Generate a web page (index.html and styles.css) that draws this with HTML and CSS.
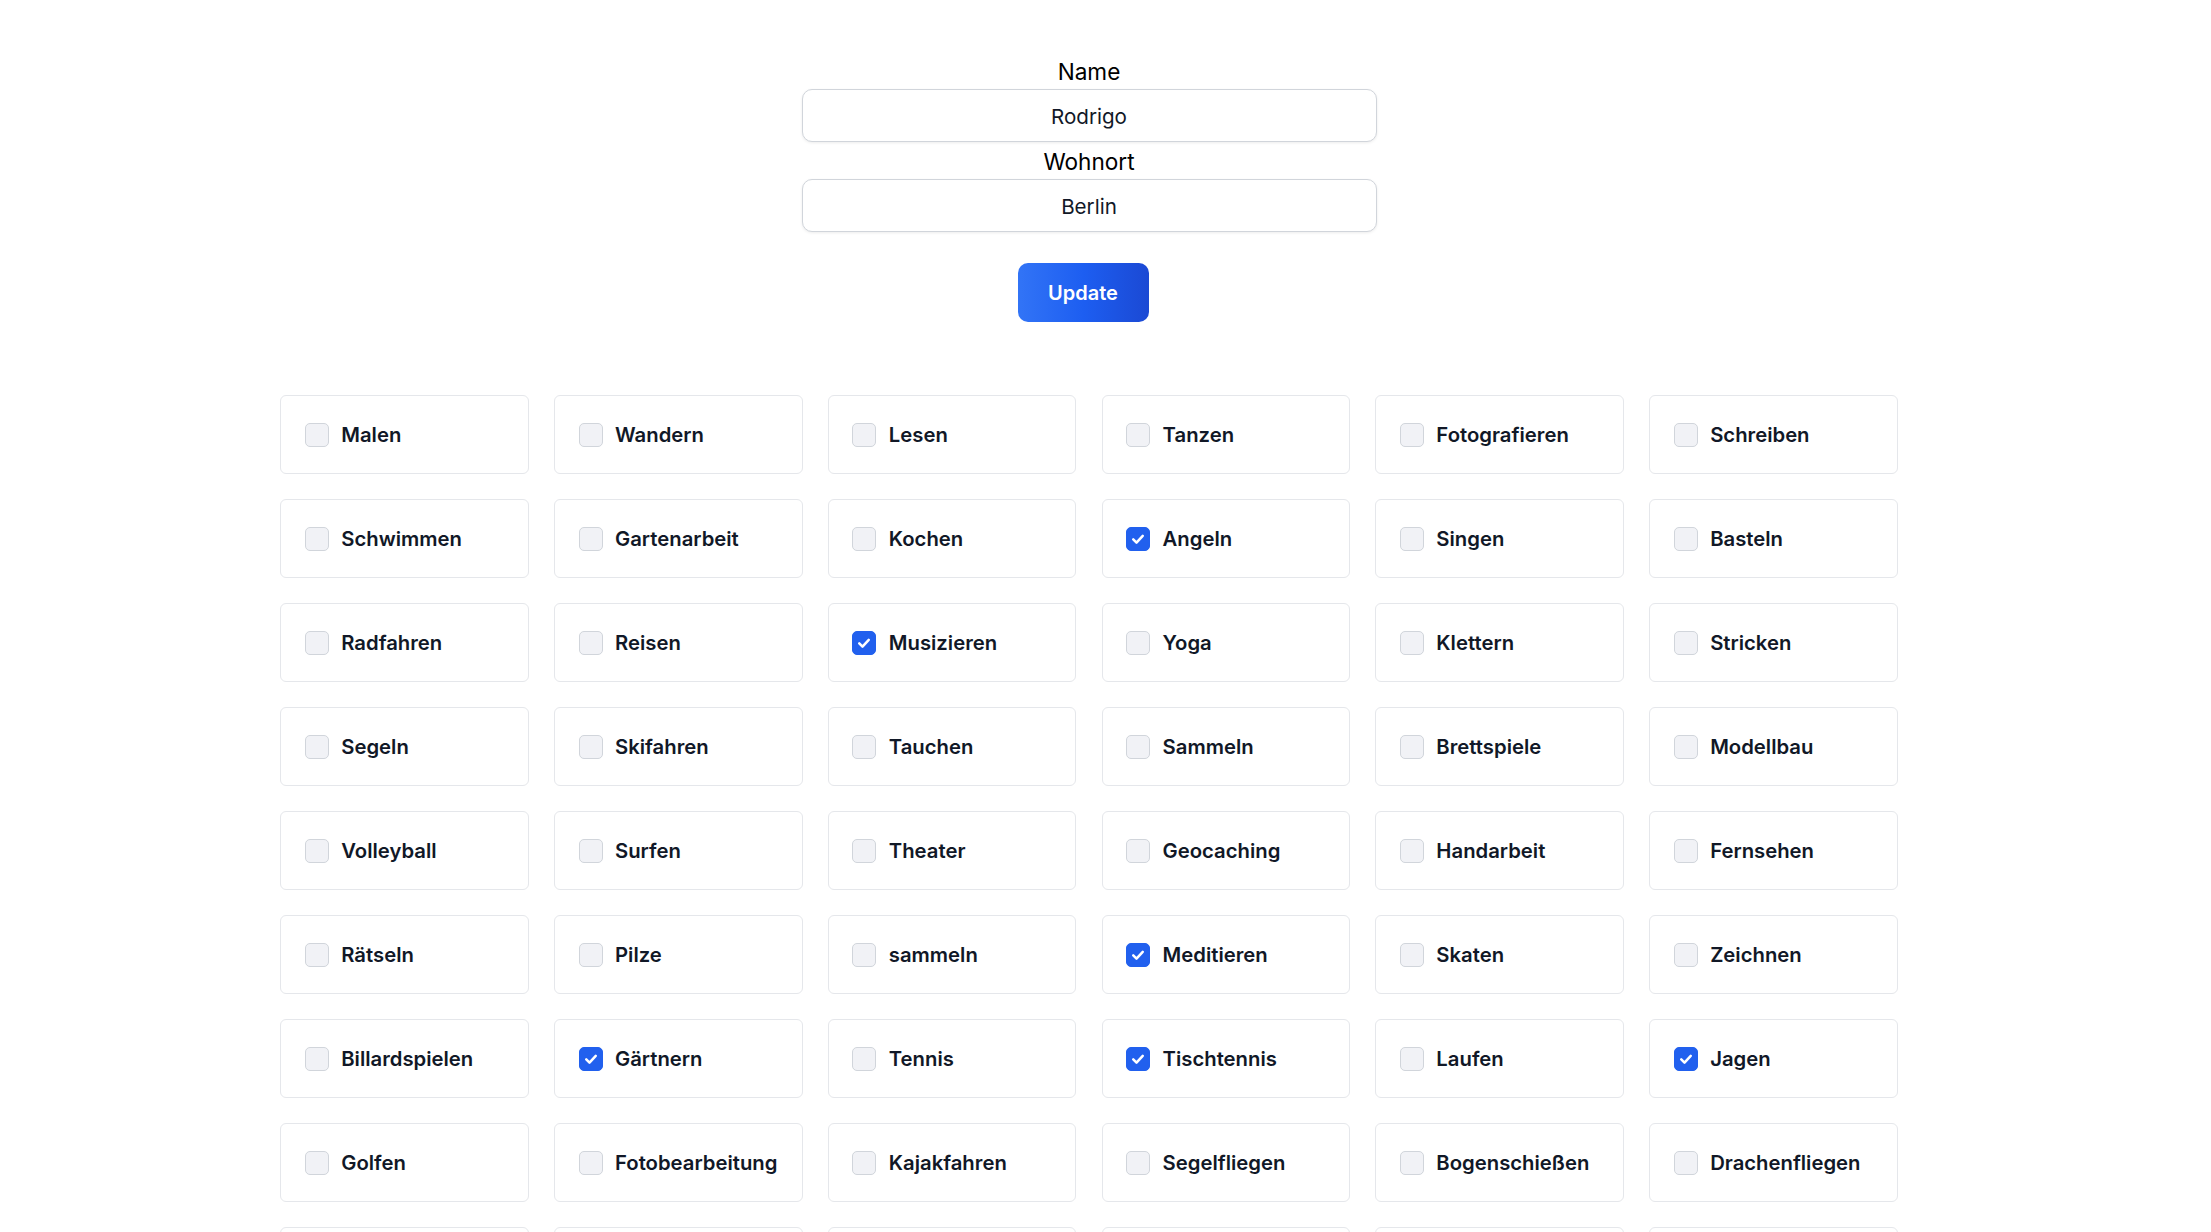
FILE: index.html
```html
<!DOCTYPE html>
<html lang="de">
<head>
<meta charset="utf-8">
<title>Hobbys</title>
<link rel="stylesheet" href="styles.css">
</head>
<body>
<div class="page">
  <form class="profile">
    <label class="field-label" for="name">Name</label>
    <input class="field-input" id="name" type="text" value="Rodrigo">
    <label class="field-label field-label--second" for="ort">Wohnort</label>
    <input class="field-input" id="ort" type="text" value="Berlin">
    <button class="update-btn" type="button">Update</button>
  </form>

  <div class="hobby-grid">
    <label class="hobby"><span class="box"></span><span class="hobby-name">Malen</span></label>
    <label class="hobby"><span class="box"></span><span class="hobby-name">Wandern</span></label>
    <label class="hobby"><span class="box"></span><span class="hobby-name">Lesen</span></label>
    <label class="hobby"><span class="box"></span><span class="hobby-name">Tanzen</span></label>
    <label class="hobby"><span class="box"></span><span class="hobby-name">Fotografieren</span></label>
    <label class="hobby"><span class="box"></span><span class="hobby-name">Schreiben</span></label>

    <label class="hobby"><span class="box"></span><span class="hobby-name">Schwimmen</span></label>
    <label class="hobby"><span class="box"></span><span class="hobby-name">Gartenarbeit</span></label>
    <label class="hobby"><span class="box"></span><span class="hobby-name">Kochen</span></label>
    <label class="hobby"><span class="box checked"><svg viewBox="0 0 16 16"><path d="M4.2 8.3l2.6 2.6 5-5.4"/></svg></span><span class="hobby-name">Angeln</span></label>
    <label class="hobby"><span class="box"></span><span class="hobby-name">Singen</span></label>
    <label class="hobby"><span class="box"></span><span class="hobby-name">Basteln</span></label>

    <label class="hobby"><span class="box"></span><span class="hobby-name">Radfahren</span></label>
    <label class="hobby"><span class="box"></span><span class="hobby-name">Reisen</span></label>
    <label class="hobby"><span class="box checked"><svg viewBox="0 0 16 16"><path d="M4.2 8.3l2.6 2.6 5-5.4"/></svg></span><span class="hobby-name">Musizieren</span></label>
    <label class="hobby"><span class="box"></span><span class="hobby-name">Yoga</span></label>
    <label class="hobby"><span class="box"></span><span class="hobby-name">Klettern</span></label>
    <label class="hobby"><span class="box"></span><span class="hobby-name">Stricken</span></label>

    <label class="hobby"><span class="box"></span><span class="hobby-name">Segeln</span></label>
    <label class="hobby"><span class="box"></span><span class="hobby-name">Skifahren</span></label>
    <label class="hobby"><span class="box"></span><span class="hobby-name">Tauchen</span></label>
    <label class="hobby"><span class="box"></span><span class="hobby-name">Sammeln</span></label>
    <label class="hobby"><span class="box"></span><span class="hobby-name">Brettspiele</span></label>
    <label class="hobby"><span class="box"></span><span class="hobby-name">Modellbau</span></label>

    <label class="hobby"><span class="box"></span><span class="hobby-name">Volleyball</span></label>
    <label class="hobby"><span class="box"></span><span class="hobby-name">Surfen</span></label>
    <label class="hobby"><span class="box"></span><span class="hobby-name">Theater</span></label>
    <label class="hobby"><span class="box"></span><span class="hobby-name">Geocaching</span></label>
    <label class="hobby"><span class="box"></span><span class="hobby-name">Handarbeit</span></label>
    <label class="hobby"><span class="box"></span><span class="hobby-name">Fernsehen</span></label>

    <label class="hobby"><span class="box"></span><span class="hobby-name">Rätseln</span></label>
    <label class="hobby"><span class="box"></span><span class="hobby-name">Pilze</span></label>
    <label class="hobby"><span class="box"></span><span class="hobby-name">sammeln</span></label>
    <label class="hobby"><span class="box checked"><svg viewBox="0 0 16 16"><path d="M4.2 8.3l2.6 2.6 5-5.4"/></svg></span><span class="hobby-name">Meditieren</span></label>
    <label class="hobby"><span class="box"></span><span class="hobby-name">Skaten</span></label>
    <label class="hobby"><span class="box"></span><span class="hobby-name">Zeichnen</span></label>

    <label class="hobby"><span class="box"></span><span class="hobby-name">Billardspielen</span></label>
    <label class="hobby"><span class="box checked"><svg viewBox="0 0 16 16"><path d="M4.2 8.3l2.6 2.6 5-5.4"/></svg></span><span class="hobby-name">Gärtnern</span></label>
    <label class="hobby"><span class="box"></span><span class="hobby-name">Tennis</span></label>
    <label class="hobby"><span class="box checked"><svg viewBox="0 0 16 16"><path d="M4.2 8.3l2.6 2.6 5-5.4"/></svg></span><span class="hobby-name">Tischtennis</span></label>
    <label class="hobby"><span class="box"></span><span class="hobby-name">Laufen</span></label>
    <label class="hobby"><span class="box checked"><svg viewBox="0 0 16 16"><path d="M4.2 8.3l2.6 2.6 5-5.4"/></svg></span><span class="hobby-name">Jagen</span></label>

    <label class="hobby"><span class="box"></span><span class="hobby-name">Golfen</span></label>
    <label class="hobby"><span class="box"></span><span class="hobby-name">Fotobearbeitung</span></label>
    <label class="hobby"><span class="box"></span><span class="hobby-name">Kajakfahren</span></label>
    <label class="hobby"><span class="box"></span><span class="hobby-name">Segelfliegen</span></label>
    <label class="hobby"><span class="box"></span><span class="hobby-name">Bogenschießen</span></label>
    <label class="hobby"><span class="box"></span><span class="hobby-name">Drachenfliegen</span></label>

    <label class="hobby"><span class="box"></span><span class="hobby-name">Reiten</span></label>
    <label class="hobby"><span class="box"></span><span class="hobby-name">Bouldern</span></label>
    <label class="hobby"><span class="box"></span><span class="hobby-name">Joggen</span></label>
    <label class="hobby"><span class="box"></span><span class="hobby-name">Kegeln</span></label>
    <label class="hobby"><span class="box"></span><span class="hobby-name">Schach</span></label>
    <label class="hobby"><span class="box"></span><span class="hobby-name">Imkern</span></label>
  </div>
</div>
</body>
</html>
```

FILE: styles.css
```css
html, body {
  margin: 0;
  padding: 0;
  background: #ffffff;
}

body {
  font-family: Inter, "Noto Sans", "Liberation Sans", sans-serif;
  color: #000000;
}

.page {
  width: 2178px;
  padding-top: 55px;
  display: flex;
  flex-direction: column;
  align-items: center;
}

.profile {
  display: flex;
  flex-direction: column;
  align-items: center;
  width: 575px;
  margin: 0;
}

.field-label {
  font-size: 22.6px;
  line-height: 34px;
  font-weight: 400;
  color: #000000;
  text-align: center;
}

.field-label--second {
  margin-top: 3px;
}

.field-input {
  box-sizing: border-box;
  width: 575px;
  height: 53px;
  margin: 0;
  border: 1.5px solid #d1d5db;
  border-radius: 10px;
  background: #ffffff;
  box-shadow: 0 1px 3px rgba(0, 0, 0, 0.08);
  font-family: Inter, "Noto Sans", "Liberation Sans", sans-serif;
  font-size: 20.6px;
  color: #111827;
  text-align: center;
  padding-top: 2px;
  outline: none;
}

.update-btn {
  margin-top: 31px;
  margin-right: 12px;
  width: 131px;
  height: 59px;
  border: none;
  border-radius: 10px;
  background: linear-gradient(to right, #3274f6 0%, #1d5ef1 50%, #1b49d4 100%);
  color: #ffffff;
  font-family: Inter, "Noto Sans", "Liberation Sans", sans-serif;
  font-size: 20px;
  font-weight: 600;
  cursor: pointer;
}

.hobby-grid {
  margin-top: 72.7px;
  display: grid;
  grid-template-columns: repeat(6, 248.4px);
  grid-auto-rows: 79.5px;
  column-gap: 25.4px;
  row-gap: 24.5px;
}

.hobby {
  box-sizing: border-box;
  display: flex;
  align-items: center;
  gap: 12.4px;
  padding: 1px 23.5px 0;
  border: 1px solid #e5e7eb;
  border-radius: 6px;
  background: #ffffff;
  cursor: pointer;
}

.box {
  box-sizing: border-box;
  flex: none;
  width: 24px;
  height: 24px;
  border: 1px solid #d1d5db;
  border-radius: 5px;
  background: #f1f2f6;
  display: flex;
  align-items: center;
  justify-content: center;
}

.box.checked {
  border-color: #2160ee;
  background: #2160ee;
}

.box svg {
  width: 20px;
  height: 20px;
  fill: none;
  stroke: #ffffff;
  stroke-width: 2;
  stroke-linecap: round;
  stroke-linejoin: round;
}

.hobby-name {
  font-size: 20.3px;
  font-weight: 600;
  color: #111827;
  line-height: 24px;
  white-space: nowrap;
}
```
